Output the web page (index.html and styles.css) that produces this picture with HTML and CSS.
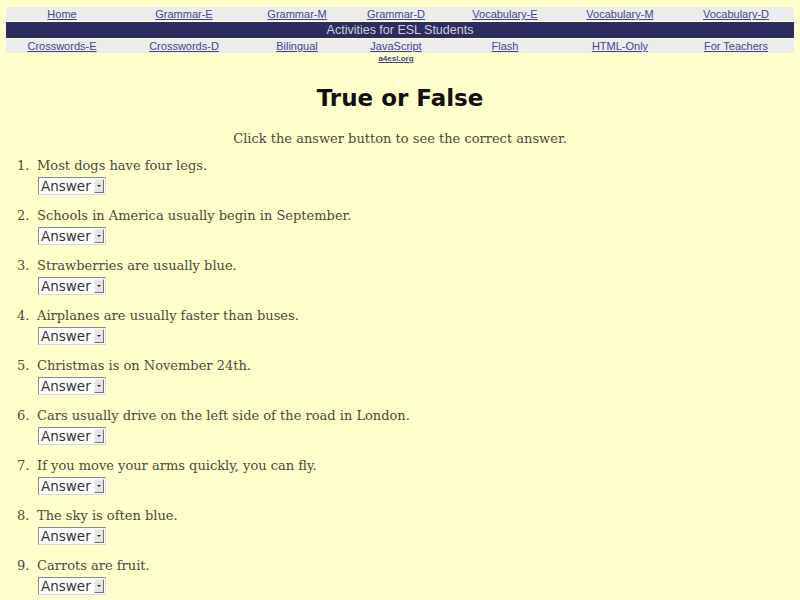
FILE: index.html
```html
<!DOCTYPE html>
<html lang="en">
<head>
<meta charset="utf-8">
<title>True or False</title>
<link rel="stylesheet" href="styles.css">
</head>
<body>
<nav class="site-nav">
  <div class="nav-row">
    <a href="#">Home</a>
    <a href="#">Grammar-E</a>
    <a href="#">Grammar-M</a>
    <a href="#">Grammar-D</a>
    <a href="#">Vocabulary-E</a>
    <a href="#">Vocabulary-M</a>
    <a href="#">Vocabulary-D</a>
  </div>
  <div class="nav-band">Activities for ESL Students</div>
  <div class="nav-row">
    <a href="#">Crosswords-E</a>
    <a href="#">Crosswords-D</a>
    <a href="#">Bilingual</a>
    <a href="#">JavaScript</a>
    <a href="#">Flash</a>
    <a href="#">HTML-Only</a>
    <a href="#">For Teachers</a>
  </div>
  <div class="nav-sub">
    <span></span><span></span><span></span>
    <a href="#">a4esl.org</a>
  </div>
</nav>

<h1 class="title">True or False</h1>
<p class="intro">Click the answer button to see the correct answer.</p>

<ol class="quiz">
  <li><span class="q">Most dogs have four legs.</span><span class="answer"><select><option>Answer</option><option>True</option><option>False</option></select></span></li>
  <li><span class="q">Schools in America usually begin in September.</span><span class="answer"><select><option>Answer</option><option>True</option><option>False</option></select></span></li>
  <li><span class="q">Strawberries are usually blue.</span><span class="answer"><select><option>Answer</option><option>True</option><option>False</option></select></span></li>
  <li><span class="q">Airplanes are usually faster than buses.</span><span class="answer"><select><option>Answer</option><option>True</option><option>False</option></select></span></li>
  <li><span class="q">Christmas is on November 24th.</span><span class="answer"><select><option>Answer</option><option>True</option><option>False</option></select></span></li>
  <li><span class="q">Cars usually drive on the left side of the road in London.</span><span class="answer"><select><option>Answer</option><option>True</option><option>False</option></select></span></li>
  <li><span class="q">If you move your arms quickly, you can fly.</span><span class="answer"><select><option>Answer</option><option>True</option><option>False</option></select></span></li>
  <li><span class="q">The sky is often blue.</span><span class="answer"><select><option>Answer</option><option>True</option><option>False</option></select></span></li>
  <li><span class="q">Carrots are fruit.</span><span class="answer"><select><option>Answer</option><option>True</option><option>False</option></select></span></li>
</ol>
</body>
</html>
```

FILE: styles.css
```css
html, body {
  margin: 0;
  background: #ffffcc;
}

body {
  padding: 7px 6px 0;
  font-family: "DejaVu Serif", serif;
  color: #4a4a3c;
}

/* top navigation table */
.site-nav {
  display: flex;
  flex-direction: column;
  gap: 1px;
  font-family: "Liberation Sans", Arial, sans-serif;
}

.nav-row,
.nav-sub {
  display: grid;
  grid-template-columns: 112px 132px 94px 104px 114px 116px 116px;
}

.nav-row {
  background: #ececec;
  height: 14px;
  align-items: center;
}

.nav-row a {
  text-align: center;
  font-size: 11px;
  line-height: 14px;
  color: #45458f;
  text-decoration: underline;
}

.nav-band {
  background: #2c2c5e;
  color: #d0d0d8;
  height: 16px;
  line-height: 16px;
  font-size: 12.5px;
  text-align: center;
}

.nav-sub a {
  text-align: center;
  font-size: 8px;
  font-weight: bold;
  line-height: 10px;
  color: #45458f;
  text-decoration: underline;
}

/* heading */
.title {
  margin: 19px 0 0;
  text-align: center;
  font-family: "DejaVu Sans", sans-serif;
  font-weight: bold;
  font-size: 23px;
  line-height: 30px;
  color: #111;
}

.intro {
  margin: 18px 0 0;
  text-align: center;
  font-size: 13px;
  line-height: 16px;
}

/* quiz list */
.quiz {
  margin: 11px 0 0;
  padding-left: 11px;
  list-style: none;
  counter-reset: item;
  font-size: 13px;
  line-height: 16px;
}

.quiz li {
  display: grid;
  grid-template-columns: 20px auto;
  align-content: start;
  justify-items: start;
  height: 50px;
  counter-increment: item;
}

.quiz li::before {
  content: counter(item) ".";
  grid-row: 1;
  grid-column: 1;
}

.q {
  grid-column: 2;
}

.answer {
  grid-column: 2;
  position: relative;
  display: inline-block;
  margin-top: 3px;
  margin-left: 1px;
}

.answer select {
  appearance: none;
  -webkit-appearance: none;
  display: block;
  width: 68px;
  height: 18px;
  margin: 0;
  padding: 0 0 0 2px;
  font-family: "DejaVu Sans", sans-serif;
  font-size: 13.5px;
  line-height: 16px;
  color: #333;
  background: #ffffff;
  border: 1px solid;
  border-color: #8a8a8a #d8d8d8 #d8d8d8 #8a8a8a;
  border-radius: 0;
}

/* the drop-down arrow button */
.answer::after {
  content: "";
  position: absolute;
  top: 2px;
  right: 2px;
  width: 10px;
  height: 14px;
  background: #e4e4e4;
  border: 1px solid;
  border-color: #f4f4f4 #707070 #707070 #f4f4f4;
  box-sizing: border-box;
  pointer-events: none;
}

.answer::before {
  content: "";
  position: absolute;
  top: 8px;
  right: 5px;
  width: 0;
  height: 0;
  border-left: 2px solid transparent;
  border-right: 2px solid transparent;
  border-top: 2px solid #222;
  z-index: 1;
  pointer-events: none;
}
```
